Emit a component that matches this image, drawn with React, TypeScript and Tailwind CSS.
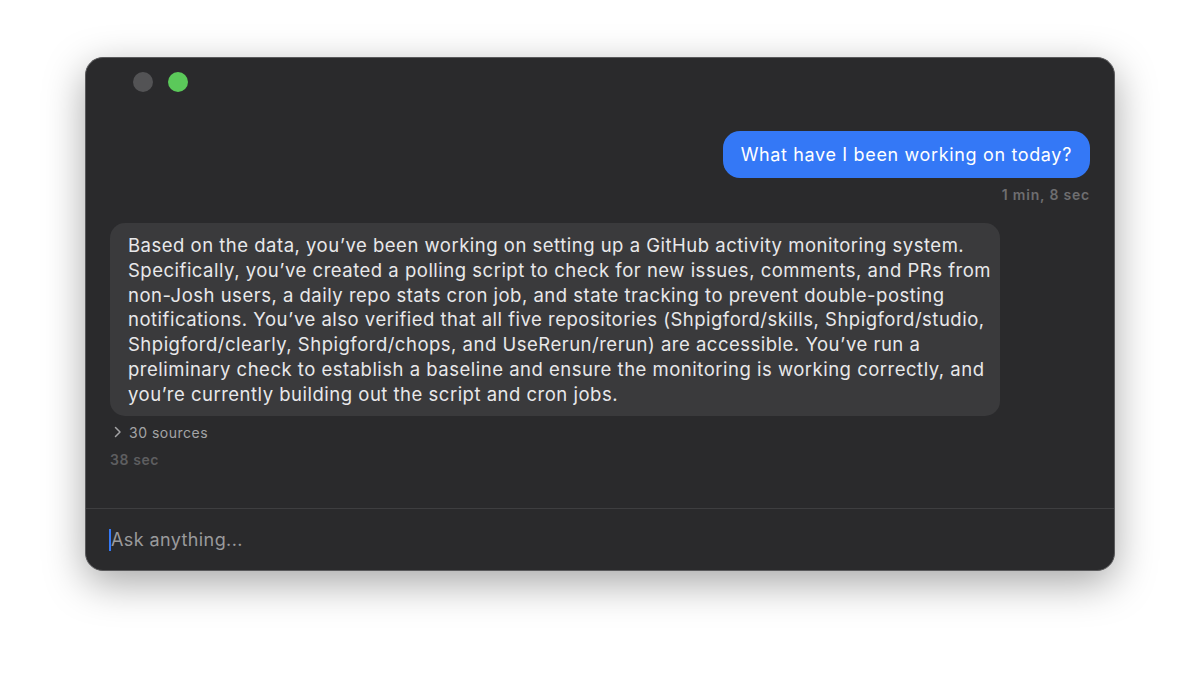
import React from "react";

const answerLines = [
  "Based on the data, you’ve been working on setting up a GitHub activity monitoring system.",
  "Specifically, you’ve created a polling script to check for new issues, comments, and PRs from",
  "non-Josh users, a daily repo stats cron job, and state tracking to prevent double-posting",
  "notifications. You’ve also verified that all five repositories (Shpigford/skills, Shpigford/studio,",
  "Shpigford/clearly, Shpigford/chops, and UseRerun/rerun) are accessible. You’ve run a",
  "preliminary check to establish a baseline and ensure the monitoring is working correctly, and",
  "you’re currently building out the script and cron jobs.",
];

export default function App() {
  return (
    <div
      className="min-h-[683px] w-full bg-white pt-[57px]"
      style={{ fontFamily: "Inter, 'Helvetica Neue', Arial, sans-serif" }}
    >
      <div className="mx-auto flex h-[514px] w-[1030px] flex-col rounded-[18px] border border-[#5a5a5c] bg-[#2a2a2c] shadow-[0_12px_40px_rgba(0,0,0,0.35)]">
        {/* title bar */}
        <div className="flex gap-[15px] pl-[47px] pt-[14px]">
          <span className="h-[20px] w-[20px] rounded-full bg-[#535355]" />
          <span className="h-[20px] w-[20px] rounded-full bg-[#5bc95a]" />
        </div>

        {/* conversation */}
        <div className="flex flex-1 flex-col px-[24px] pt-[39px]">
          <div className="flex flex-col items-end">
            <div className="rounded-[17px] bg-[#3478f6] px-[18px] py-[12px] text-[18px] leading-[23px] tracking-[0.65px] text-white">
              What have I been working on today?
            </div>
            <div className="mt-[6px] text-[14px] font-semibold tracking-[0.8px] text-[#6e6e70]">
              1 min, 8 sec
            </div>
          </div>

          <div className="mt-[18px] w-[890px] rounded-[15px] bg-[#3a3a3c] px-[18px] pb-[9px] pt-[10px] text-[18.5px] leading-[24.8px] tracking-[0.5px] text-[#e8e8ea]">
            {answerLines.map((line) => (
              <span key={line} className="block whitespace-nowrap">
                {line}
              </span>
            ))}
          </div>
          <div className="mt-[6px] flex items-center gap-[5px] pl-[2px] text-[14px] tracking-[0.5px] text-[#a4a4a6]">
            <svg width="12" height="12" viewBox="0 0 12 12" fill="none">
              <path d="M3.5 1.5 8 6l-4.5 4.5" stroke="#a4a4a6" strokeWidth="1.5" strokeLinecap="round" strokeLinejoin="round" />
            </svg>
            <span>30 sources</span>
          </div>
          <div className="mt-[6px] text-[14px] font-semibold tracking-[0.6px] text-[#5e5e60]">
            38 sec
          </div>
        </div>

        {/* input */}
        <div className="flex h-[62px] items-center border-t border-[#3e3e40] pl-[23px]">
          <span className="h-[22px] w-[2px] bg-[#3478f6]" />
          <span className="text-[18px] tracking-[0.4px] text-[#9a9a9c]">Ask anything...</span>
        </div>
      </div>
    </div>
  );
}
